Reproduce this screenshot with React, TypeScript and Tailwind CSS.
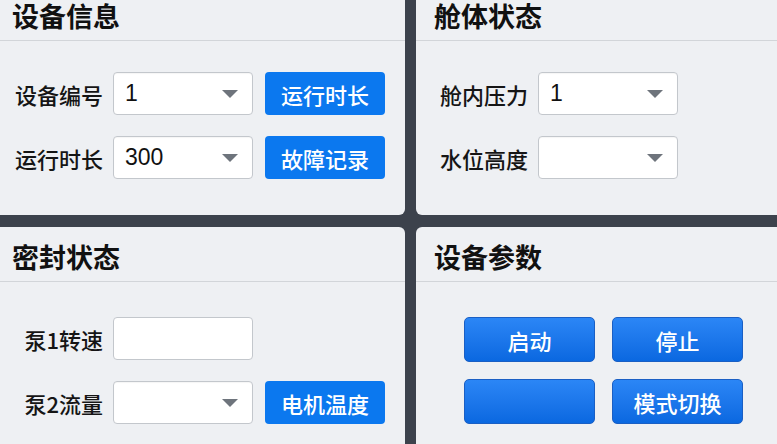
import React from "react";

const FONT = { fontFamily: '"Noto Sans CJK SC", "Noto Sans", sans-serif' };

function Caret() {
  return (
    <svg width="16" height="8" viewBox="0 0 16 8" className="shrink-0">
      <polygon points="0,0 16,0 8,8" fill="#6e747c" />
    </svg>
  );
}

function Select({ value }: { value?: string }) {
  return (
    <div className="w-[140px] h-[43px] bg-white border border-[#c3c7cc] rounded-[4px] flex items-center justify-between pl-[11px] pr-[14px] shadow-[inset_0_1px_1px_rgba(0,0,0,0.04)]">
      <span className="text-[23px] text-[#111] leading-none" style={{ fontFamily: '"Liberation Sans", Arial, sans-serif' }}>
        {value ?? ""}
      </span>
      <Caret />
    </div>
  );
}

function Input() {
  return <div className="w-[140px] h-[43px] bg-white border border-[#c3c7cc] rounded-[4px]" />;
}

function FlatButton({ children }: { children: React.ReactNode }) {
  return (
    <div className="w-[120px] h-[43px] bg-[#0b78ef] rounded-[4px] flex items-center justify-center text-white text-[22px] font-medium leading-none">
      {children}
    </div>
  );
}

function Label({ children, w = "w-[88px]" }: { children: React.ReactNode; w?: string }) {
  return <div className={`${w} text-right text-[22px] font-medium text-[#151515] leading-none`}>{children}</div>;
}

function Panel({ title, children, bodyPad }: { title: string; children: React.ReactNode; bodyPad: string }) {
  return (
    <div className="bg-[#eef0f3] rounded-[6px] flex flex-col overflow-hidden">
      <div className="h-[55px] border-b border-[#d2d5d9] flex items-center pl-[18px] pt-[5px]">
        <span className="text-[27px] font-bold text-[#111] leading-none">{title}</span>
      </div>
      <div className={bodyPad}>{children}</div>
    </div>
  );
}

function GradButton({ children }: { children?: React.ReactNode }) {
  return (
    <div className="w-[131px] h-[45px] rounded-[5px] border border-[#1a5fc4] bg-gradient-to-b from-[#2b86f6] to-[#0a68e0] flex items-center justify-center text-white text-[22px] font-medium leading-none">
      {children}
    </div>
  );
}

export default function App() {
  return (
    <div className="w-[777px] h-[444px] overflow-hidden bg-[#3c424c]" style={FONT}>
      <div className="-ml-[6px] -mt-[14px] grid grid-cols-[411px_411px] grid-rows-[229px_229px] gap-x-[11px] gap-y-[12px]">
        <Panel title="设备信息" bodyPad="pt-[31px] pl-[21px] flex flex-col gap-[21px]">
          <div className="flex items-center">
            <Label>设备编号</Label>
            <div className="ml-[10px]"><Select value="1" /></div>
            <div className="ml-[12px]"><FlatButton>运行时长</FlatButton></div>
          </div>
          <div className="flex items-center">
            <Label>运行时长</Label>
            <div className="ml-[10px]"><Select value="300" /></div>
            <div className="ml-[12px]"><FlatButton>故障记录</FlatButton></div>
          </div>
        </Panel>
        <Panel title="舱体状态" bodyPad="pt-[31px] pl-[24px] flex flex-col gap-[21px]">
          <div className="flex items-center">
            <Label>舱内压力</Label>
            <div className="ml-[10px]"><Select value="1" /></div>
          </div>
          <div className="flex items-center">
            <Label>水位高度</Label>
            <div className="ml-[10px]"><Select /></div>
          </div>
        </Panel>
        <Panel title="密封状态" bodyPad="pt-[35px] pl-[21px] flex flex-col gap-[21px]">
          <div className="flex items-center">
            <Label>泵1转速</Label>
            <div className="ml-[10px]"><Input /></div>
          </div>
          <div className="flex items-center">
            <Label>泵2流量</Label>
            <div className="ml-[10px]"><Select /></div>
            <div className="ml-[12px]"><FlatButton>电机温度</FlatButton></div>
          </div>
        </Panel>
        <Panel title="设备参数" bodyPad="pt-[35px] pl-[48px]">
          <div className="grid grid-cols-[131px_131px] gap-x-[17px] gap-y-[17px]">
            <GradButton>启动</GradButton>
            <GradButton>停止</GradButton>
            <GradButton />
            <GradButton>模式切换</GradButton>
          </div>
        </Panel>
      </div>
    </div>
  );
}
